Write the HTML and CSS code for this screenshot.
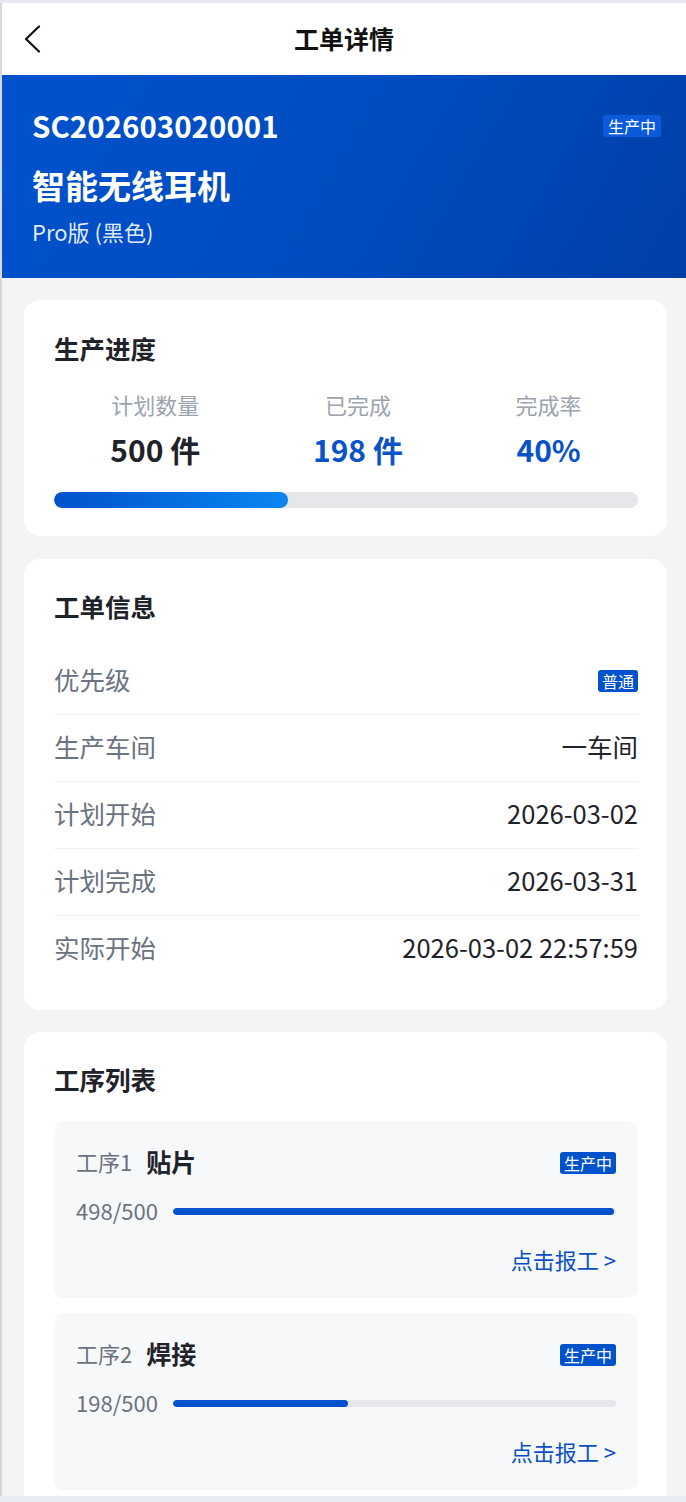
FILE: index.html
```html
<!DOCTYPE html>
<html lang="zh-CN">
<head>
<meta charset="utf-8">
<title>工单详情</title>
<link rel="stylesheet" href="styles.css">
</head>
<body>
<div class="app">
  <header class="nav">
    <span class="back">
      <svg width="18" height="28" viewBox="0 0 18 28"><polyline points="16,1.5 3,14 16,26.5" fill="none" stroke="#111" stroke-width="2.2" stroke-linecap="round" stroke-linejoin="round"/></svg>
    </span>
    <h1 class="nav-title">工单详情</h1>
  </header>

  <section class="hero">
    <div class="hero-top">
      <div class="order-no">SC202603020001</div>
      <span class="hero-badge">生产中</span>
    </div>
    <div class="product">智能无线耳机</div>
    <div class="spec">Pro版 (黑色)</div>
  </section>

  <section class="card card-progress">
    <h2 class="card-title">生产进度</h2>
    <div class="stats">
      <div class="stat">
        <div class="stat-label">计划数量</div>
        <div class="stat-value">500 件</div>
      </div>
      <div class="stat">
        <div class="stat-label">已完成</div>
        <div class="stat-value blue">198 件</div>
      </div>
      <div class="stat">
        <div class="stat-label">完成率</div>
        <div class="stat-value blue">40%</div>
      </div>
    </div>
    <div class="bar"><div class="bar-fill" style="width:40%"></div></div>
  </section>

  <section class="card card-info">
    <h2 class="card-title">工单信息</h2>
    <div class="rows">
      <div class="row"><span class="row-label">优先级</span><span class="tag">普通</span></div>
      <div class="row"><span class="row-label">生产车间</span><span class="row-value">一车间</span></div>
      <div class="row"><span class="row-label">计划开始</span><span class="row-value">2026-03-02</span></div>
      <div class="row"><span class="row-label">计划完成</span><span class="row-value">2026-03-31</span></div>
      <div class="row"><span class="row-label">实际开始</span><span class="row-value">2026-03-02 22:57:59</span></div>
    </div>
  </section>

  <section class="card card-steps">
    <h2 class="card-title">工序列表</h2>
    <div class="steps">
      <div class="step">
        <div class="step-head">
          <span class="step-no">工序1</span>
          <span class="step-name">贴片</span>
          <span class="tag step-tag">生产中</span>
        </div>
        <div class="step-progress">
          <span class="step-count">498/500</span>
          <div class="step-bar"><div class="step-fill" style="width:99.6%"></div></div>
        </div>
        <div class="step-action">点击报工 &gt;</div>
      </div>
      <div class="step">
        <div class="step-head">
          <span class="step-no">工序2</span>
          <span class="step-name">焊接</span>
          <span class="tag step-tag">生产中</span>
        </div>
        <div class="step-progress">
          <span class="step-count">198/500</span>
          <div class="step-bar"><div class="step-fill" style="width:39.6%"></div></div>
        </div>
        <div class="step-action">点击报工 &gt;</div>
      </div>
    </div>
  </section>
</div>
</body>
</html>
```

FILE: styles.css
```css
* { box-sizing: border-box; }
html, body {
  margin: 0;
  padding: 0;
}
body {
  background: #e8ebf1;
  font-family: "Noto Sans CJK SC", "Noto Sans", sans-serif;
  color: #1f2329;
}
.app {
  margin-top: 3px;
  height: 1493px;
  overflow: hidden;
  background: #f4f4f5;
  border-left: 2px solid #d6d8dc;
}

/* nav */
.nav {
  height: 72px;
  background: #fff;
  display: flex;
  align-items: center;
  justify-content: center;
  position: relative;
  padding-bottom: 2px;
}
.back {
  position: absolute;
  left: 21px;
  top: 22px;
  display: flex;
}
.nav-title {
  margin: 0;
  font-size: 25px;
  font-weight: 700;
  line-height: 32px;
  color: #111;
}

/* hero */
.hero {
  height: 203px;
  background: linear-gradient(120deg, #0052cc 0%, #004bc0 55%, #003fa6 100%);
  padding: 32px 25px 0 30px;
  color: #fff;
}
.hero-top {
  display: flex;
  align-items: center;
  justify-content: space-between;
}
.order-no {
  font-size: 29.5px;
  font-weight: 700;
  line-height: 36px;
}
.hero-badge {
  font-size: 16px;
  line-height: 22px;
  padding: 0 5px;
  background: #0a5ad9;
  border-radius: 3px;
  margin-top: 2px;
}
.product {
  margin-top: 22px;
  font-size: 33px;
  font-weight: 700;
  line-height: 40px;
}
.spec {
  margin-top: 11px;
  font-size: 22px;
  line-height: 30px;
  color: rgba(255,255,255,0.9);
}

/* cards */
.card {
  background: #fff;
  border-radius: 16px;
  margin: 22px 19px 0 22px;
  padding: 34px 29px 28px 30px;
}
.card-title {
  margin: -2px 0 0;
  font-size: 25.5px;
  font-weight: 700;
  line-height: 32px;
  color: #1f2329;
}
.card-info, .card-steps { padding-top: 33px; }
.card-info { margin-top: 23px; }

/* progress card */
.stats {
  display: flex;
  justify-content: space-around;
  margin-top: 26px;
}
.stat { text-align: center; }
.stat-label {
  font-size: 22px;
  line-height: 28px;
  color: #9ca3af;
}
.stat-value {
  margin-top: 13px;
  font-size: 30px;
  font-weight: 700;
  line-height: 36px;
  color: #1f2329;
}
.stat-value.blue { color: #0a52c8; }
.bar {
  margin-top: 25px;
  height: 16px;
  border-radius: 8px;
  background: #e5e7eb;
  overflow: hidden;
}
.bar-fill {
  height: 100%;
  border-radius: 8px;
  background: linear-gradient(90deg, #0052cc 0%, #0a86f2 100%);
}

/* info card */
.rows { margin-top: 26px; }
.row {
  display: flex;
  align-items: center;
  justify-content: space-between;
  height: 67px;
  padding-bottom: 4px;
  border-bottom: 1px solid #f0f1f3;
}
.row:last-child {
  border-bottom: none;
  height: 66px;
}
.row-label {
  font-size: 25.5px;
  line-height: 30px;
  color: #6b7280;
}
.row-value {
  font-size: 25.5px;
  line-height: 30px;
  color: #1f2329;
}
.tag {
  font-size: 16px;
  line-height: 22px;
  padding: 0 4px;
  background: #0052cc;
  color: #fff;
  border-radius: 3px;
}
.row .tag { margin-top: 3px; }

/* steps */
.steps {
  margin-top: 26px;
  display: flex;
  flex-direction: column;
  gap: 15px;
}
.step {
  background: #f7f8fa;
  border-radius: 10px;
  padding: 25px 22px 25px 22px;
}
.step-head {
  display: flex;
  align-items: center;
  height: 30px;
}
.step-no {
  font-size: 22px;
  line-height: 30px;
  color: #6b7280;
}
.step-name {
  margin-left: 14px;
  font-size: 25px;
  font-weight: 700;
  line-height: 30px;
  color: #1f2329;
}
.step-tag { margin-left: auto; margin-top: 4px; }
.step-progress {
  margin-top: 21px;
  display: flex;
  align-items: center;
  gap: 15px;
  height: 26px;
}
.step-count {
  font-size: 22px;
  line-height: 26px;
  color: #6b7280;
}
.step-bar {
  flex: 1;
  height: 7px;
  border-radius: 4px;
  background: #e5e7eb;
  overflow: hidden;
  margin-top: 2px;
}
.step-fill {
  height: 100%;
  border-radius: 4px;
  background: #0052cc;
}
.step-action {
  margin-top: 22px;
  text-align: right;
  font-size: 22px;
  line-height: 28px;
  color: #0a4fc2;
}
```
